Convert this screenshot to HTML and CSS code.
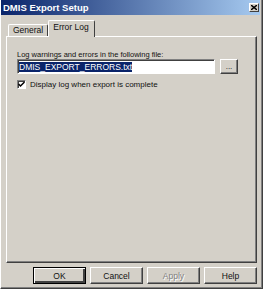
FILE: index.html
```html
<!DOCTYPE html>
<html lang="en">
<head>
  <meta charset="UTF-8">
  <title>DMIS Export Setup</title>
  <link rel="stylesheet" href="styles.css">
</head>
<body>

<div class="window">
  <!-- Title Bar -->
  <div class="titlebar">
    <span class="title">DMIS Export Setup</span>
    <span class="close-btn">
      <svg width="6" height="5" viewBox="0 0 6 5"><path d="M0 0L6 5M6 0L0 5" stroke="#000" stroke-width="1.4"/></svg>
    </span>
  </div>

  <div class="dialog-body">
    <!-- Tabs -->
    <div class="tabs">
      <div class="tab">General</div>
      <div class="tab active">Error Log</div>
    </div>

    <!-- Tab Panel -->
    <div class="panel">
      <div class="field-label">Log warnings and errors in the following file:</div>
      <div class="file-row">
        <div class="file-input"><span class="selected">DMIS_EXPORT_ERRORS.txt</span></div>
        <div class="btn browse-btn">...</div>
      </div>
      <div class="check-row">
        <span class="checkbox">
          <svg width="7" height="7" viewBox="0 0 7 7"><path d="M0.5 3L2.5 5L6.5 1" fill="none" stroke="#000" stroke-width="1.5"/></svg>
        </span>
        <span class="check-label">Display log when export is complete</span>
      </div>
    </div>

    <!-- Buttons -->
    <div class="button-row">
      <div class="btn default">OK</div>
      <div class="btn">Cancel</div>
      <div class="btn disabled">Apply</div>
      <div class="btn">Help</div>
    </div>
  </div>
</div>

</body>
</html>
```

FILE: styles.css
```css
/* Global Styles */
body {
  margin: 0;
  font-family: "Liberation Sans Narrow", "Liberation Sans", Arial, sans-serif;
  font-size: 7.5px;
  color: #111111;
  background-color: #d4d0c8;
}

.window {
  width: 263px;
  height: 289px;
  box-sizing: border-box;
  background-color: #d4d0c8;
  border-left: 1px solid #ffffff;
  border-right: 1px solid #404040;
  border-bottom: 1px solid #404040;
  box-shadow: inset -1px -1px #808080;
  display: flex;
  flex-direction: column;
}

/* Title Bar */
.titlebar {
  height: 15px;
  margin-right: 2px;
  padding-left: 2px;
  display: flex;
  align-items: center;
  justify-content: space-between;
  background: linear-gradient(to right, #0a246a, #a6caf0);
}

.title {
  color: #ffffff;
  font-weight: bold;
  font-size: 9.5px;
}

.close-btn {
  width: 10px;
  height: 9px;
  margin-right: 1px;
  box-sizing: border-box;
  background-color: #d4d0c8;
  border-top: 1px solid #ffffff;
  border-left: 1px solid #ffffff;
  border-right: 1px solid #404040;
  border-bottom: 1px solid #404040;
  display: flex;
  align-items: center;
  justify-content: center;
}

.close-btn svg {
  display: block;
}

.dialog-body {
  padding: 5px 5px 0 5px;
}

/* Tabs */
.tabs {
  height: 16px;
  padding-left: 2px;
  display: flex;
  align-items: flex-end;
}

.tab {
  height: 12px;
  box-sizing: border-box;
  padding: 0 4px;
  border-top: 1px solid #ffffff;
  border-left: 1px solid #ffffff;
  border-right: 1px solid #404040;
  border-radius: 2px 2px 0 0;
  line-height: 11px;
  font-size: 8.5px;
}

.tab.active {
  height: 17px;
  margin-bottom: -1px;
  padding: 1px 5px 0 4px;
  background-color: #d4d0c8;
  position: relative;
  z-index: 1;
}

/* Tab Panel */
.panel {
  height: 227px;
  box-sizing: border-box;
  padding: 13px 0 0 10px;
  border-top: 1px solid #ffffff;
  border-left: 1px solid #ffffff;
  border-right: 1px solid #404040;
  border-bottom: 1px solid #404040;
  box-shadow: inset -1px -1px #808080;
}

.field-label {
  line-height: 9px;
}

.file-row {
  display: flex;
  align-items: flex-start;
}

.file-input {
  width: 198px;
  height: 15px;
  box-sizing: border-box;
  padding: 2px 0 0 1px;
  background-color: #ffffff;
  border-top: 1px solid #808080;
  border-left: 1px solid #808080;
  border-right: 1px solid #ffffff;
  border-bottom: 1px solid #ffffff;
  box-shadow: inset 1px 1px #404040;
  font-size: 8.5px;
  line-height: 10px;
}

.selected {
  background-color: #0a246a;
  color: #ffffff;
}

.check-row {
  margin-top: 6px;
  display: flex;
  align-items: center;
  gap: 4px;
}

.check-label {
  font-size: 8px;
}

.checkbox {
  width: 9px;
  height: 9px;
  box-sizing: border-box;
  background-color: #ffffff;
  border-top: 1px solid #808080;
  border-left: 1px solid #808080;
  border-right: 1px solid #ffffff;
  border-bottom: 1px solid #ffffff;
  box-shadow: inset 1px 1px #404040;
  display: flex;
  align-items: center;
  justify-content: center;
}

.checkbox svg {
  display: block;
}

/* Buttons */
.btn {
  width: 53px;
  height: 17px;
  box-sizing: border-box;
  border-top: 1px solid #ffffff;
  border-left: 1px solid #ffffff;
  border-right: 1px solid #404040;
  border-bottom: 1px solid #404040;
  box-shadow: inset -1px -1px #808080;
  display: flex;
  align-items: center;
  justify-content: center;
  font-size: 8.5px;
}

.btn.default {
  border: 1px solid #000000;
  box-shadow: inset 1px 1px #ffffff, inset -2px -2px #404040;
}

.btn.disabled {
  color: #808080;
  text-shadow: 1px 1px #ffffff;
}

.browse-btn {
  width: 18px;
  height: 15px;
  margin-left: 5px;
  font-size: 8px;
}

.button-row {
  margin-top: 4px;
  display: flex;
  justify-content: flex-end;
  gap: 4px;
}
```
